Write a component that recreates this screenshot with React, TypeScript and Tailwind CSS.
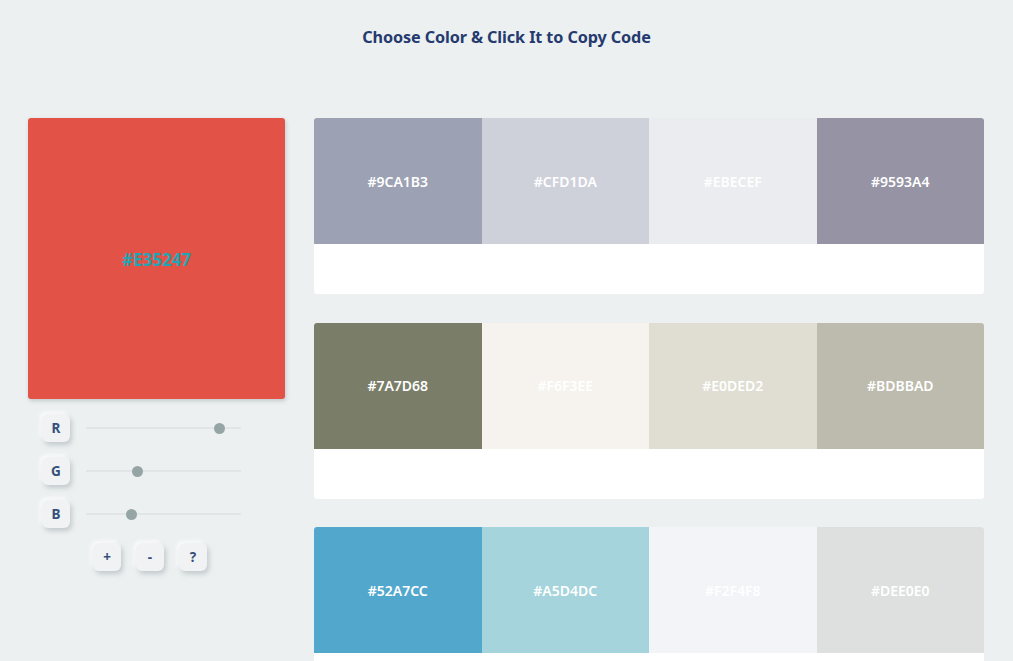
import React from "react";

const palettes: string[][] = [
  ["#9CA1B3", "#CFD1DA", "#EBECEF", "#9593A4"],
  ["#7A7D68", "#F6F3EE", "#E0DED2", "#BDBBAD"],
  ["#52A7CC", "#A5D4DC", "#F2F4F8", "#DEE0E0"],
];

const sliders = [
  { label: "R", pos: 133 },
  { label: "G", pos: 51 },
  { label: "B", pos: 45 },
];

function NeuButton({ children }: { children: React.ReactNode }) {
  return (
    <div className="w-[28px] h-[28px] rounded-[6px] bg-[#f0f2f3] flex items-center justify-center text-[13.5px] font-bold text-[#34507a] shadow-[2px_3px_5px_rgba(160,170,175,0.55),-2px_-2px_4px_rgba(255,255,255,0.9)]">
      {children}
    </div>
  );
}

export default function App() {
  return (
    <div
      className="w-[1013px] h-[661px] overflow-hidden bg-[#ecf0f1]"
      style={{ fontFamily: '"Noto Sans", "Open Sans", sans-serif' }}
    >
      <div className="h-[118px] pt-[25px] flex justify-center">
        <h1 className="text-[16.2px] font-bold text-[#253a6e] leading-[24px] tracking-[-0.1px]">
          Choose Color &amp; Click It to Copy Code
        </h1>
      </div>
      <div className="flex pl-[28px] gap-[29px]">
        <div className="w-[257px] flex flex-col">
          <div className="h-[281px] rounded-[3px] bg-[#E35247] flex items-center justify-center shadow-[1px_2px_4px_rgba(120,130,135,0.35)]">
            <span className="text-[17px] font-bold text-[#1fa6b4] pt-[2px]">
              #E35247
            </span>
          </div>
          <div className="flex flex-col gap-[15px] mt-[15px] pl-[14px]">
            {sliders.map((s) => (
              <div key={s.label} className="flex items-center gap-[16px]">
                <NeuButton>{s.label}</NeuButton>
                <div className="relative w-[155px] h-[2px] bg-[#e1e5e6] rounded">
                  <div
                    className="absolute top-1/2 w-[11px] h-[11px] -mt-[5.5px] -ml-[5.5px] rounded-full bg-[#95a5a6]"
                    style={{ left: `${s.pos}px` }}
                  />
                </div>
              </div>
            ))}
            <div className="flex gap-[15px] pl-[51px]">
              <NeuButton>+</NeuButton>
              <NeuButton>-</NeuButton>
              <NeuButton>?</NeuButton>
            </div>
          </div>
        </div>
        <div className="w-[670px] flex flex-col gap-[28.5px]">
          {palettes.map((row, i) => (
            <div key={i} className="h-[176px] bg-white rounded-[3px] overflow-hidden flex flex-col">
              <div className="h-[126px] flex">
                {row.map((c) => (
                  <div
                    key={c}
                    className="flex-1 flex items-center justify-center text-white text-[14px] font-semibold"
                    style={{ backgroundColor: c }}
                  >
                    {c}
                  </div>
                ))}
              </div>
            </div>
          ))}
        </div>
      </div>
    </div>
  );
}
